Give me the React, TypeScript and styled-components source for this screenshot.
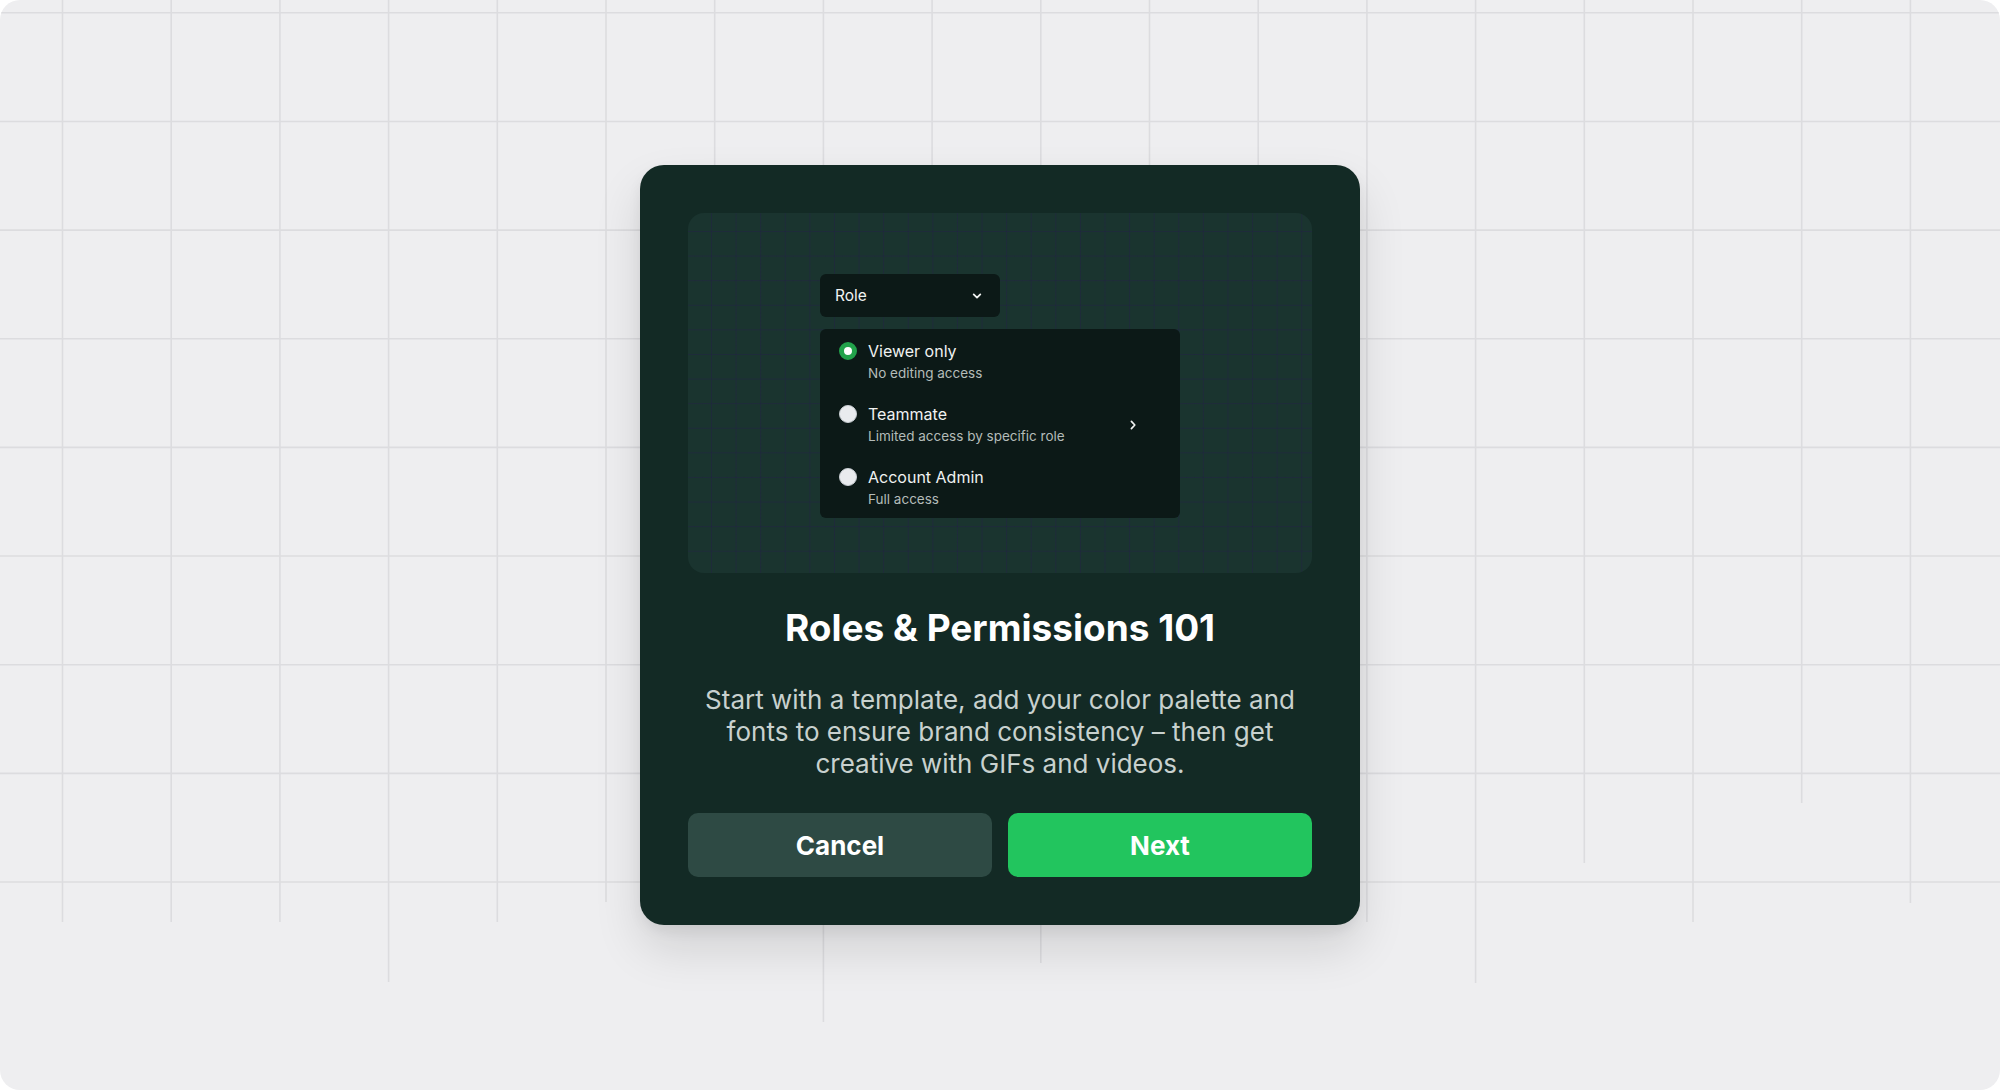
import styled, { createGlobalStyle } from "styled-components";

const GlobalStyle = createGlobalStyle`
  html, body {
    margin: 0;
    padding: 0;
    background: #ffffff;
  }
  body {
    font-family: Inter, "Noto Sans", sans-serif;
    -webkit-font-smoothing: antialiased;
  }
  * {
    box-sizing: border-box;
  }
`;

const Frame = styled.div`
  position: relative;
  height: 100vh;
  border-radius: 20px;
  background-color: #eeeef0;
  overflow: hidden;
  display: flex;
  align-items: center;
  justify-content: center;
`;

const GridCanvas = styled.svg`
  position: absolute;
  inset: 0;
  width: 100%;
  height: 100%;
`;

const Card = styled.div`
  position: relative;
  width: 720px;
  padding: 48px;
  border-radius: 24px;
  background-color: #132a25;
  box-shadow: 0 24px 48px rgba(0, 0, 0, 0.12), 0 6px 14px rgba(0, 0, 0, 0.06);
  display: flex;
  flex-direction: column;
`;

const Preview = styled.div`
  height: 360px;
  border-radius: 16px;
  padding-top: 61px;
  background-color: #1a342f;
  background-image: linear-gradient(
      to right,
      rgba(32, 40, 62, 0.75) 1px,
      transparent 1px
    ),
    linear-gradient(to bottom, rgba(32, 40, 62, 0.75) 1px, transparent 1px);
  background-size: 24.6px 24.6px;
  background-position: 23px 18px;
  display: flex;
  justify-content: center;
`;

const Picker = styled.div`
  width: 360px;
  display: flex;
  flex-direction: column;
  align-items: flex-start;
  gap: 12px;
`;

const RoleSelect = styled.div`
  width: 180px;
  height: 43px;
  padding: 0 17px 0 15px;
  border-radius: 6px;
  background-color: #0c1917;
  color: #f1f3f2;
  font-size: 15.5px;
  display: flex;
  align-items: center;
  justify-content: space-between;
`;

const Menu = styled.div`
  width: 360px;
  padding: 12px 41px 10px 19px;
  border-radius: 6px;
  background-color: #0c1917;
  display: flex;
  flex-direction: column;
  gap: 22px;
`;

const Item = styled.div`
  display: flex;
  align-items: flex-start;
  gap: 11px;
`;

const Radio = styled.span<{ $checked?: boolean }>`
  flex: none;
  width: 18px;
  height: 18px;
  margin-top: 1px;
  border-radius: 50%;
  background-color: ${(p) => (p.$checked ? "#ffffff" : "#e9ebee")};
  border: ${(p) => (p.$checked ? "5.5px solid #22a24b" : "1px solid #c9ced3")};
`;

const ItemText = styled.div`
  flex: 1;
  display: flex;
  flex-direction: column;
  gap: 3px;
`;

const ItemTitle = styled.div`
  color: #f0f2f1;
  font-size: 16px;
  line-height: 20px;
`;

const ItemSub = styled.div`
  color: #b4bcb9;
  font-size: 13.5px;
  line-height: 18px;
`;

const Chevron = styled.svg`
  flex: none;
  align-self: center;
`;

const Title = styled.h1`
  margin: 35px 0 0;
  color: #ffffff;
  font-size: 37px;
  line-height: 40px;
  font-weight: 700;
  text-align: center;
`;

const Description = styled.p`
  margin: 36px 0 0;
  color: #c8d1ce;
  font-size: 26px;
  line-height: 32px;
  font-weight: 400;
  text-align: center;
`;

const Actions = styled.div`
  margin-top: 33px;
  display: grid;
  grid-template-columns: 1fr 1fr;
  gap: 16px;
`;

const Button = styled.button<{ $primary?: boolean }>`
  height: 64px;
  border: none;
  border-radius: 10px;
  background-color: ${(p) => (p.$primary ? "#22c55e" : "#2e4a44")};
  color: #ffffff;
  font-family: inherit;
  font-size: 26px;
  font-weight: 700;
  cursor: pointer;
`;

const COL = 108.7;
const ROW = 108.65;
// where each vertical line of the backdrop stops
const colEnds = [
  922, 922, 922, 982, 922, 902, 900, 1022, 900, 963, 900, 900, 922, 983, 863,
  922, 803, 903,
];
const rows = [0, 1, 2, 3, 4, 5, 6, 7, 8];

const roles = [
  { title: "Viewer only", sub: "No editing access", checked: true },
  { title: "Teammate", sub: "Limited access by specific role", more: true },
  { title: "Account Admin", sub: "Full access" },
];

export default function App() {
  return (
    <>
      <GlobalStyle />
      <Frame>
        <GridCanvas>
          {colEnds.map((end, i) => {
            const x = 62.5 + COL * i;
            return (
              <line
                key={"c" + i}
                x1={x}
                x2={x}
                y1={0}
                y2={end}
                stroke="#dcdcdf"
                strokeWidth={1.6}
              />
            );
          })}
          {rows.map((i) => {
            const y = 12.8 + ROW * i;
            return (
              <line
                key={"r" + i}
                x1={0}
                x2={2000}
                y1={y}
                y2={y}
                stroke="#dcdcdf"
                strokeWidth={1.6}
              />
            );
          })}
        </GridCanvas>

        <Card>
          <Preview>
            <Picker>
              <RoleSelect>
                <span>Role</span>
                <svg width="12" height="12" viewBox="0 0 12 12" fill="none">
                  <path
                    d="M2.7 4.4 L6 7.6 L9.3 4.4"
                    stroke="#f1f3f2"
                    strokeWidth="1.8"
                    strokeLinecap="round"
                    strokeLinejoin="round"
                  />
                </svg>
              </RoleSelect>

              <Menu>
                {roles.map((r) => (
                  <Item key={r.title}>
                    <Radio $checked={r.checked} />
                    <ItemText>
                      <ItemTitle>{r.title}</ItemTitle>
                      <ItemSub>{r.sub}</ItemSub>
                    </ItemText>
                    {r.more && (
                      <Chevron width="12" height="12" viewBox="0 0 12 12" fill="none">
                        <path
                          d="M4.4 2.4 L7.8 6 L4.4 9.6"
                          stroke="#f1f3f2"
                          strokeWidth="1.7"
                          strokeLinecap="round"
                          strokeLinejoin="round"
                        />
                      </Chevron>
                    )}
                  </Item>
                ))}
              </Menu>
            </Picker>
          </Preview>

          <Title>Roles &amp; Permissions 101</Title>
          <Description>
            Start with a template, add your color palette and
            <br />
            fonts to ensure brand consistency – then get
            <br />
            creative with GIFs and videos.
          </Description>

          <Actions>
            <Button>Cancel</Button>
            <Button $primary>Next</Button>
          </Actions>
        </Card>
      </Frame>
    </>
  );
}
